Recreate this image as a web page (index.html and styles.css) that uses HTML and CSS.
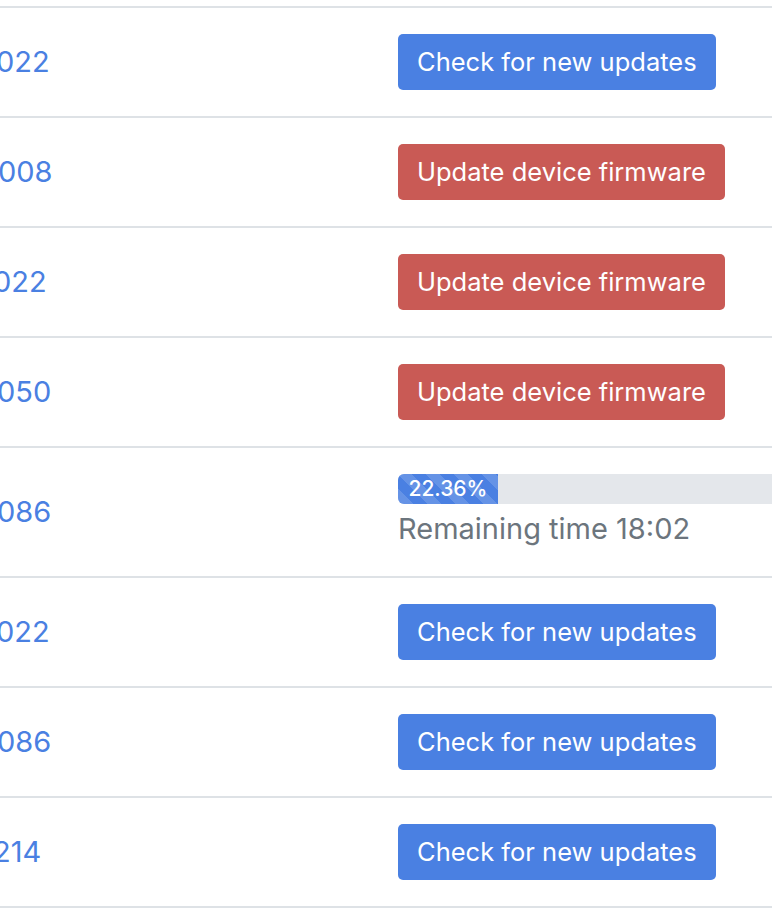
FILE: index.html
```html
<!DOCTYPE html>
<html lang="en">
<head>
<meta charset="utf-8">
<title>Devices</title>
<link rel="stylesheet" href="styles.css">
</head>
<body>
<div class="table">
  <div class="row">
    <div class="cell first"><a class="link s1" href="#">022</a></div>
    <div class="cell"><button class="btn btn-primary">Check for new updates</button></div>
  </div>
  <div class="row">
    <div class="cell first"><a class="link s2" href="#">008</a></div>
    <div class="cell"><button class="btn btn-danger">Update device firmware</button></div>
  </div>
  <div class="row">
    <div class="cell first"><a class="link s3" href="#">022</a></div>
    <div class="cell"><button class="btn btn-danger">Update device firmware</button></div>
  </div>
  <div class="row">
    <div class="cell first"><a class="link s4" href="#">050</a></div>
    <div class="cell"><button class="btn btn-danger">Update device firmware</button></div>
  </div>
  <div class="row">
    <div class="cell first"><a class="link s5" href="#">086</a></div>
    <div class="cell">
      <div class="progress-wrap">
        <div class="progress"><div class="progress-bar" style="width: 22.36%">22.36%</div></div>
        <div class="remaining">Remaining time 18:02</div>
      </div>
    </div>
  </div>
  <div class="row">
    <div class="cell first"><a class="link s6" href="#">022</a></div>
    <div class="cell"><button class="btn btn-primary">Check for new updates</button></div>
  </div>
  <div class="row">
    <div class="cell first"><a class="link s7" href="#">086</a></div>
    <div class="cell"><button class="btn btn-primary">Check for new updates</button></div>
  </div>
  <div class="row last">
    <div class="cell first"><a class="link s8" href="#">214</a></div>
    <div class="cell"><button class="btn btn-primary">Check for new updates</button></div>
  </div>
</div>
</body>
</html>
```

FILE: styles.css
```css
html, body {
  margin: 0;
  padding: 0;
  background: #ffffff;
  overflow: hidden;
}

body {
  font-family: Inter, "Liberation Sans", sans-serif;
  font-size: 29px;
  line-height: 1.5;
  color: #212529;
}

.table {
  margin-top: 6px;
  width: 900px;
}

.row {
  display: grid;
  grid-template-columns: 398px 1fr;
  border-top: 2px solid #dee2e6;
}

.row.last {
  border-bottom: 2px solid #dee2e6;
}

.cell {
  display: flex;
  align-items: center;
  padding: 26px 0;
}

.first {
  overflow: hidden;
}

.link {
  color: #4a80e2;
  text-decoration: none;
  white-space: nowrap;
}

.s1 { margin-left: -4px; }
.s2 { margin-left: -2px; }
.s3 { margin-left: -7px; }
.s4 { margin-left: -3px; }
.s5 { margin-left: -3px; }
.s6 { margin-left: -4px; }
.s7 { margin-left: -3px; }
.s8 { margin-left: -7px; }

.btn {
  font-family: Inter, "Liberation Sans", sans-serif;
  font-size: 25.5px;
  line-height: 36px;
  padding: 10px 19px;
  border: 0;
  border-radius: 5px;
  color: #ffffff;
  cursor: pointer;
}

.btn-primary {
  background: #4a80e2;
}

.btn-danger {
  background: #c95a55;
}

.progress-wrap {
  display: flex;
  flex-direction: column;
  gap: 3px;
  width: 447px;
}

.progress {
  display: flex;
  height: 30px;
  background: #e4e7eb;
  border-radius: 6px;
  overflow: hidden;
}

.progress-bar {
  display: flex;
  align-items: center;
  justify-content: center;
  color: #ffffff;
  font-size: 21px;
  font-weight: 500;
  line-height: 30px;
  background-color: #4a80e2;
  background-image: linear-gradient(45deg, rgba(255,255,255,0.15) 25%, transparent 25%, transparent 50%, rgba(255,255,255,0.15) 50%, rgba(255,255,255,0.15) 75%, transparent 75%, transparent);
  background-size: 28px 28px;
  white-space: nowrap;
}

.remaining {
  color: #6c757d;
  line-height: 43px;
}
```
